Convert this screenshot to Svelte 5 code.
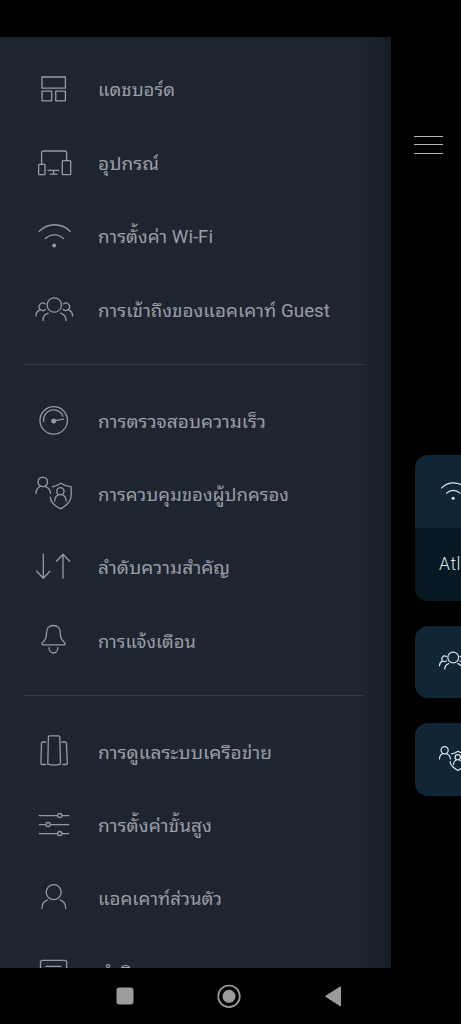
<script>
    let groups = [
        [
            { icon: 'dashboard', label: 'แดชบอร์ด', width: 77 },
            { icon: 'devices', label: 'อุปกรณ์', width: 61 },
            { icon: 'wifi', label: 'การตั้งค่า Wi-Fi', width: 115 },
            { icon: 'guest', label: 'การเข้าถึงของแอคเคาท์ Guest', width: 232 }
        ],
        [
            { icon: 'speed', label: 'การตรวจสอบความเร็ว', width: 168 },
            { icon: 'parental', label: 'การควบคุมของผู้ปกครอง', width: 191 },
            { icon: 'priority', label: 'ลำดับความสำคัญ', width: 132 },
            { icon: 'bell', label: 'การแจ้งเตือน', width: 98 }
        ],
        [
            { icon: 'network', label: 'การดูแลระบบเครือข่าย', width: 174 },
            { icon: 'sliders', label: 'การตั้งค่าขั้นสูง', width: 114 },
            { icon: 'user', label: 'แอคเคาท์ส่วนตัว', width: 124 },
            { icon: 'feedback', label: 'คำติชม', width: 58 }
        ]
    ];
</script>

{#snippet icon(name)}
    <svg class="icon" viewBox="0 0 40 40">
        {#if name === 'dashboard'}
            <rect x="8" y="7" width="23.4" height="11.2" />
            <rect x="8" y="21.2" width="9.7" height="9.6" />
            <rect x="21.7" y="21.2" width="9.7" height="9.6" />
        {:else if name === 'devices'}
            <path d="M7.6 20.2V9q0-2 2-2h21q2 0 2 2v7.4" />
            <rect x="4.6" y="20.3" width="6.4" height="10.4" rx=".8" />
            <rect x="28.3" y="16.6" width="8.4" height="14.1" rx=".8" />
            <path d="M14 26.4h10.8M19.6 26.4v3.7M16.3 30.2h6.6" />
        {:else if name === 'wifi'}
            <path d="M4.9 14.6A21.5 21.5 0 0 1 36.4 14.6M11.4 21.5A13 13 0 0 1 29.4 21.5" />
            <circle class="dot" cx="20.2" cy="28.4" r="2" />
        {:else if name === 'guest'}
            <circle cx="20.3" cy="14" r="7.2" />
            <path d="M9 29.4C9 25.8 11 23.1 14.2 22.1M26.5 22.1C30 23.1 32 25.8 32 29.4" />
            <path d="M11 12.8A3.7 3.7 0 1 0 11.3 18.5M29.6 12.8A3.7 3.7 0 1 1 29.3 18.5" />
            <path d="M2 25.1C2 22.3 3 20.4 5.5 19.2M38.6 25.1C38.6 22.3 37.6 20.4 35.1 19.2" />
        {:else if name === 'speed'}
            <circle cx="19.7" cy="18.4" r="13.7" />
            <path d="M9.7 19.4A10 10 0 0 1 28.9 14.2M19.7 18.9L29.7 17.2" />
            <circle class="dot" cx="19.7" cy="18.9" r="2.5" />
        {:else if name === 'parental'}
            <circle cx="8.8" cy="6.9" r="4.8" />
            <path d="M2 18.6C2 15 3 12.8 6 11.6M11.3 11.6C15 13 16.5 15 16.5 18.6" />
            <path d="M18.3 11.8C21.5 11.2 24 10 26.7 8.2C30 10.3 33 11.6 37.2 11.8V20C37.2 27 32 31 26.7 33.9C21 31 16.5 27.5 16.3 22.2" />
            <circle cx="26.4" cy="16.3" r="3.6" />
            <path d="M20.7 26C20.7 22.3 22.4 20.6 24.4 19.6M28.4 19.6C30.4 20.6 32.1 22.3 32.1 26" />
        {:else if name === 'priority'}
            <path d="M9.3 5.8V30M2.7 23.2l6.6 7 6.6-7M29 30.2V6.3M22.4 13.3l6.6-7 6.6 7" />
        {:else if name === 'bell'}
            <path d="M19.4 3.5C15 3.5 12.6 6.5 12.6 10.5C12.6 16 11 18 8.2 21C7.5 22 8 22.8 9 22.8H30C31 22.8 31.4 22 30.8 21C27.9 18 26.2 16 26.2 10.5C26.2 6.5 23.8 3.5 19.4 3.5z" />
            <path d="M15 25.6c0 7.2 8.8 7.2 8.8 0" />
        {:else if name === 'network'}
            <path d="M15.4 2.9H24.6Q25.8 2.9 25.8 4.1L26.5 31.2Q20 33.2 13.8 31.2L14.4 4.1Q14.4 2.9 15.4 2.9z" />
            <path d="M11.8 9H8.8Q7.5 9 7.5 10.4L6.9 30.2Q7 31.5 8.2 31.5H11.6M28 9H31Q32.3 9 32.4 10.4L33.3 30.2Q33.3 31.5 32.1 31.5H28.8" />
        {:else if name === 'sliders'}
            <path d="M5.3 9.6h18.1M28 9.6h6.8M5.3 18.6h6.5M16.4 18.6H34.8M5.3 27.6h18.1M28 27.6h6.8" />
            <circle cx="25.7" cy="9.6" r="2.1" />
            <circle cx="14.1" cy="18.6" r="2.1" />
            <circle cx="25.7" cy="27.6" r="2.1" />
        {:else if name === 'user'}
            <circle cx="19.7" cy="13.2" r="7.5" />
            <path d="M8 29.5C8 24.5 10 22.3 13.3 21.2M26.3 21.2C29.6 22.3 31.7 24.5 31.7 29.5" />
        {:else if name === 'feedback'}
            <rect x="6.5" y="7.4" width="26.2" height="24" rx="2" />
            <path d="M12 13.4h15M12 19h15" />
        {/if}
    </svg>
{/snippet}

<div class="screen">
    <div class="content">
        <nav class="drawer">
            {#each groups as group}
                <ul>
                    {#each group as item}
                        <li>
                            {@render icon(item.icon)}
                            <svg class="label" width="270" height="40">
                                <text x="0" y="26" textLength={item.width} lengthAdjust="spacingAndGlyphs">{item.label}</text>
                            </svg>
                        </li>
                    {/each}
                </ul>
            {/each}
        </nav>
        <main>
            <div class="burger"><i></i><i></i><i></i></div>
            <section class="card">
                <div class="row head">{@render icon('wifi')}</div>
                <div class="row network">Atl</div>
            </section>
            <section class="card">
                <div class="row head">{@render icon('guest')}</div>
            </section>
            <section class="card">
                <div class="row head">{@render icon('parental')}</div>
            </section>
        </main>
    </div>
    <footer>
        <svg viewBox="0 0 461 56">
            <rect x="116.5" y="19.5" width="17" height="17" rx="3" />
            <circle class="ring" cx="229" cy="28.3" r="10.8" />
            <circle cx="229" cy="28.3" r="6.5" />
            <path d="M325.5 28.3L340.5 18.8V38z" stroke="#9b9b9b" stroke-linejoin="round" />
        </svg>
    </footer>
</div>

<style>
    :global(body) {
        background: #000;
    }

    .screen {
        display: flex;
        flex-direction: column;
        height: 1024px;
        padding-top: 37px;
        box-sizing: border-box;
        overflow: hidden;
        background: #000;
        font-family: Roboto, "Noto Sans Thai Looped", "Noto Looped Thai", "Droid Sans Thai", Loma, Waree, Garuda, "Noto Serif Thai", "Noto Sans Thai", sans-serif;
    }

    .content {
        display: flex;
        height: 931px;
        overflow: hidden;
    }

    .drawer {
        width: 391px;
        flex-shrink: 0;
        padding-top: 16.8px;
        box-sizing: border-box;
        background: linear-gradient(to right, #1f2530 355px, #18202b 384px, #161b20 386px, #161b20);
    }

    ul {
        list-style: none;
        margin: 0 27px 0 24px;
        padding: 0 0 16.7px;
    }

    ul + ul {
        border-top: 1px solid #353b45;
        padding-top: 19.8px;
    }

    li {
        display: flex;
        align-items: center;
        gap: 24px;
        height: 73.4px;
        padding-left: 10px;
    }

    .icon {
        width: 40px;
        height: 40px;
        flex-shrink: 0;
        fill: none;
        stroke: #949aa4;
        stroke-width: 1.3;
        stroke-linecap: round;
        stroke-linejoin: round;
    }

    .icon .dot {
        fill: #949aa4;
        stroke: none;
    }

    .label {
        flex-shrink: 0;
        overflow: visible;
        font-size: 18px;
        fill: #989da6;
    }

    main {
        flex: 1;
        padding-left: 24.4px;
        overflow: hidden;
    }

    .burger {
        display: flex;
        flex-direction: column;
        gap: 7.4px;
        width: 29px;
        margin: 98.5px 0 301px -1.5px;
    }

    .burger i {
        height: 1.3px;
        background: #b5b5b5;
    }

    .card {
        width: 400px;
        margin-bottom: 25px;
        border-radius: 13px;
        overflow: hidden;
    }

    .row {
        display: flex;
        align-items: center;
        height: 72.7px;
        padding-left: 23px;
        box-sizing: border-box;
    }

    .head {
        background: #102536;
    }

    .head .icon {
        width: 30px;
        height: 30px;
        stroke: #dfe6ea;
        stroke-width: 1.6;
    }

    .head .dot {
        fill: #dfe6ea;
    }

    .network {
        padding-left: 23.6px;
        background: #061822;
        color: #dfe3e6;
        font-size: 17.5px;
        font-weight: 300;
        letter-spacing: .6px;
    }

    footer {
        height: 56px;
    }

    footer svg {
        display: block;
        width: 461px;
        height: 56px;
        fill: #9b9b9b;
    }

    .ring {
        fill: none;
        stroke: #9b9b9b;
        stroke-width: 1.7;
    }
</style>
